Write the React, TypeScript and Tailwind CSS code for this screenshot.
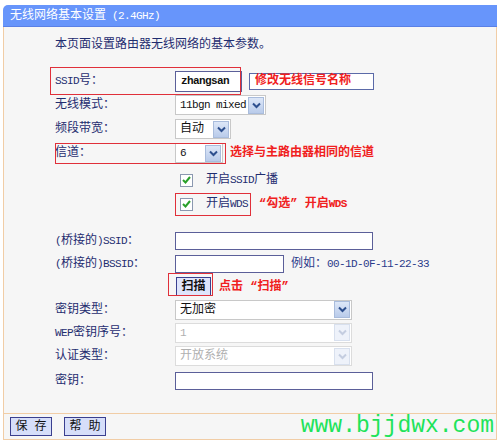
import type { ReactNode } from 'react';

const FONT = { fontFamily: '"Liberation Mono", "Noto Sans CJK SC", monospace' };

// latin glyphs in the original are half-width (~6px), so squeeze the mono font a bit
function L({ children }: { children: ReactNode }) {
  return <span className="text-[11px] tracking-[-0.6px]">{children}</span>;
}

function Arrow({ disabled }: { disabled?: boolean }) {
  return (
    <span
      className={`flex h-[17px] w-[16px] shrink-0 items-center justify-center border ${
        disabled ? 'border-[#d8e0ee] bg-[#eef2fa]' : 'border-[#a9bcdc] bg-gradient-to-b from-[#dde7f8] to-[#b9cbea]'
      }`}
    >
      <svg width="9" height="7" viewBox="0 0 9 7">
        <path d="M1 1.5 L4.5 5 L8 1.5" fill="none" stroke={disabled ? '#c4cde0' : '#2d4f8e'} strokeWidth="2" />
      </svg>
    </span>
  );
}

function Select({ value, width, disabled }: { value: ReactNode; width: string; disabled?: boolean }) {
  return (
    <div
      className={`flex h-[20px] items-center justify-between border bg-white pl-[4px] pr-[1px] ${width} ${
        disabled ? 'border-[#dcdcdc] text-[#b0b0b0]' : 'border-[#c8c8c8] text-[#111]'
      }`}
    >
      <span className="whitespace-nowrap leading-none">{value}</span>
      <Arrow disabled={disabled} />
    </div>
  );
}

function Input({ value, width, height = 'h-[18px]' }: { value?: ReactNode; width: string; height?: string }) {
  return (
    <div className={`flex items-center border border-[#5b5f99] bg-white px-[5px] text-[#111] ${width} ${height}`}>
      {value}
    </div>
  );
}

function Check() {
  return (
    <span className="flex h-[13px] w-[13px] items-center justify-center border border-[#8b98b0] bg-white">
      <svg width="9" height="8" viewBox="0 0 9 8">
        <path d="M1 4 L3.5 6.5 L8 1" fill="none" stroke="#2aa02a" strokeWidth="2" />
      </svg>
    </span>
  );
}

function Row({ label, children, h = 'h-[24px]', mt = '' }: { label?: ReactNode; children?: ReactNode; h?: string; mt?: string }) {
  return (
    <div className={`flex items-center ${h} ${mt}`}>
      <div className="w-[120px] shrink-0 whitespace-nowrap text-[#1f2d70]">{label}</div>
      <div className="flex items-center">{children}</div>
    </div>
  );
}

export default function App() {
  return (
    <div className="relative h-[442px] w-[500px] overflow-hidden bg-white text-[12px]" style={FONT}>
      <div className="ml-[3px] mt-[5px] w-[494px]">
        <div className="flex h-[22px] items-center rounded-tl-[5px] border-b border-[#5a80e6] bg-[#6795fb] pl-[7px] text-white">
          无线网络基本设置 <span className="ml-[6px]"><L>(2.4GHz)</L></span>
        </div>

        <div className="relative h-[386px] border-x border-[#f1cda6] bg-[#f6f6f6] pl-[51px] pt-[11px]">
          <div className="h-[14px] leading-[14px] text-[#1f2d70]">本页面设置路由器无线网络的基本参数。</div>

          <div className="mt-[17px]">
            <Row label={<><L>SSID</L>号：</>}>
              <Input value={<span className="font-semibold"><L>zhangsan</L></span>} width="w-[67px]" height="h-[21px]" />
              <div className="ml-[7px] flex h-[17px] w-[125px] items-center border border-[#5b6aa8] bg-white pl-[5px] font-bold text-[#f02020]">
                修改无线信号名称
              </div>
            </Row>
            <Row label="无线模式：">
              <Select value={<L>11bgn mixed</L>} width="w-[91px]" />
            </Row>
            <Row label="频段带宽：">
              <Select value="自动" width="w-[56px]" />
            </Row>
            <Row label="信道：">
              <Select value={<L>6</L>} width="w-[48px]" />
              <span className="ml-[7px] font-bold text-[#f02020]">选择与主路由器相同的信道</span>
            </Row>
            <Row mt="mt-[3px]">
              <span className="ml-[5px]"><Check /></span>
              <span className="ml-[13px] text-[#1f2d70]">开启<L>SSID</L>广播</span>
            </Row>
            <Row>
              <span className="ml-[5px]"><Check /></span>
              <span className="ml-[13px] text-[#1f2d70]">开启<L>WDS</L></span>
              <span className="ml-[11px] font-bold text-[#f02020]">“勾选” 开启<L>WDS</L></span>
            </Row>

            <Row label={<><L>(</L>桥接的<L>)SSID</L>：</>} h="h-[23px]" mt="mt-[13px]">
              <Input width="w-[198px]" />
            </Row>
            <Row label={<><L>(</L>桥接的<L>)BSSID</L>：</>} h="h-[23px]">
              <Input width="w-[109px]" />
              <span className="ml-[7px] text-[#2a3a8a]">例如：<L>00-1D-0F-11-22-33</L></span>
            </Row>
            <Row h="h-[23px]">
              <div className="ml-[1px] flex h-[19px] w-[35px] items-center justify-center border border-[#3a3f8f] bg-[#dfe5fb] font-bold text-[#111]">
                扫描
              </div>
              <span className="ml-[8px] font-bold text-[#f02020]">点击 “扫描”</span>
            </Row>
            <Row label="密钥类型：" h="h-[23px]">
              <Select value="无加密" width="w-[177px]" />
            </Row>
            <Row label={<><L>WEP</L>密钥序号：</>} h="h-[23px]">
              <Select value={<L>1</L>} width="w-[177px]" disabled />
            </Row>
            <Row label="认证类型：" h="h-[24px]">
              <Select value="开放系统" width="w-[177px]" disabled />
            </Row>
            <Row label="密钥：" h="h-[25px]">
              <Input width="w-[198px]" />
            </Row>
          </div>

          {/* red annotation frames */}
          <div className="pointer-events-none absolute left-[46px] top-[40px] h-[28px] w-[191px] border border-[#e0303a]" />
          <div className="pointer-events-none absolute left-[51px] top-[116px] h-[21px] w-[171px] border border-[#e0303a]" />
          <div className="pointer-events-none absolute left-[171px] top-[166px] h-[23px] w-[76px] border border-[#e0303a]" />
          <div className="pointer-events-none absolute left-[164px] top-[246px] h-[23px] w-[45px] border border-[#e0303a]" />
        </div>

        <div className="relative flex h-[27px] items-center gap-[12px] border border-[#f1cda6] bg-[#f6f6f6] pl-[6px]">
          <div className="flex h-[19px] w-[42px] items-center justify-center border border-[#3a3f8f] bg-[#d6def9] text-[#111]">保 存</div>
          <div className="flex h-[19px] w-[42px] items-center justify-center border border-[#3a3f8f] bg-[#d6def9] text-[#111]">帮 助</div>
          <div
            className="absolute right-[2px] top-[-3px] text-[23px] leading-[30px] text-[#1ee35a]"
            style={{ fontFamily: '"Liberation Mono", monospace' }}
          >
            www.bjjdwx.com
          </div>
        </div>
      </div>
    </div>
  );
}
